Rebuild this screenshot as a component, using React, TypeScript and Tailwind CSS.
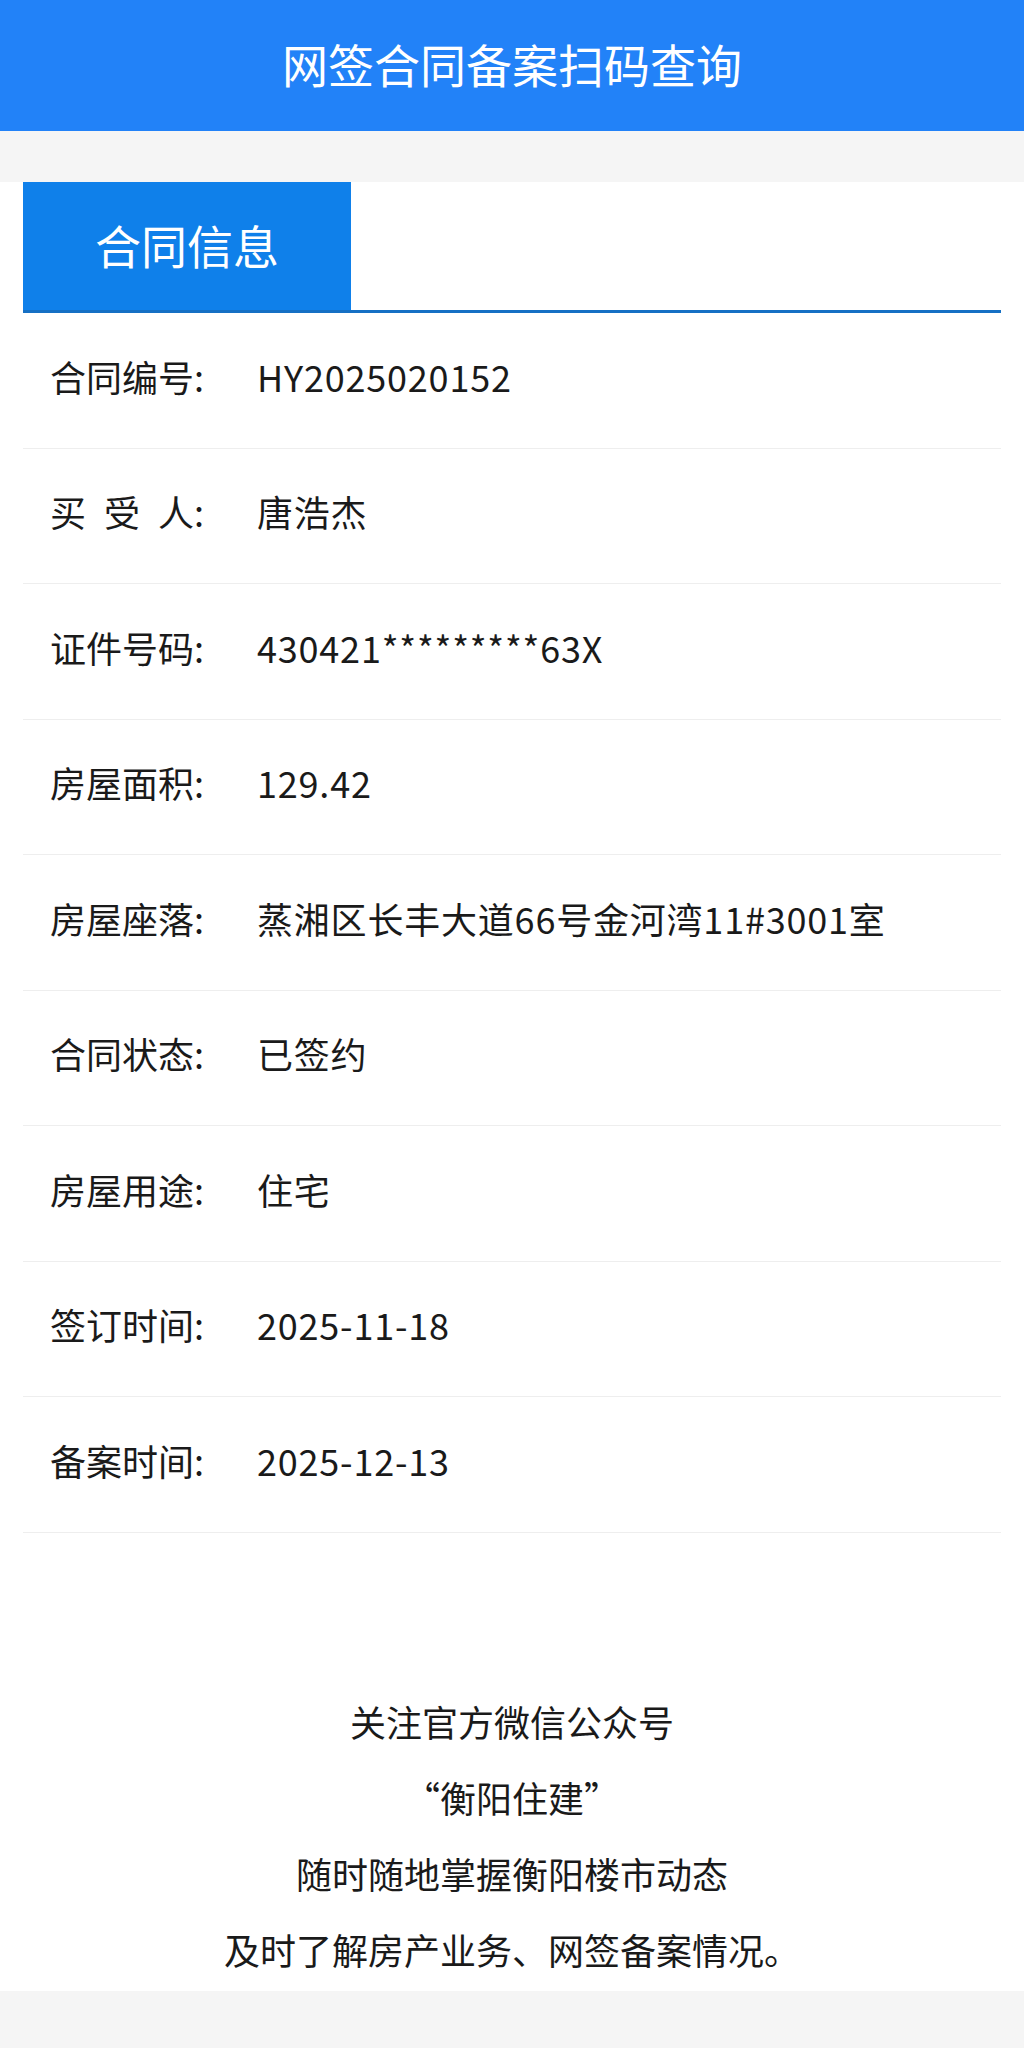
const rows: { label: string; value: string }[] = [
  { label: "合同编号", value: "HY2025020152" },
  { label: "买受人", value: "唐浩杰" },
  { label: "证件号码", value: "430421*********63X" },
  { label: "房屋面积", value: "129.42" },
  { label: "房屋座落", value: "蒸湘区长丰大道66号金河湾11#3001室" },
  { label: "合同状态", value: "已签约" },
  { label: "房屋用途", value: "住宅" },
  { label: "签订时间", value: "2025-11-18" },
  { label: "备案时间", value: "2025-12-13" },
];

const footer = [
  "关注官方微信公众号",
  "“衡阳住建”",
  "随时随地掌握衡阳楼市动态",
  "及时了解房产业务、网签备案情况。",
];

export default function App() {
  return (
    <div
      className="min-h-screen bg-[#f5f5f5] text-[#1a1a1a]"
      style={{ fontFamily: '"Noto Sans CJK SC", "Noto Sans", sans-serif' }}
    >
      <header className="h-[131px] pb-[4px] bg-[#2282f8] flex items-center justify-center text-white text-[46px]">
        网签合同备案扫码查询
      </header>

      <div className="h-[51px] bg-[#f5f5f5]" />

      <main className="bg-white px-[23px] pb-[4px]">
        <div className="flex border-b-[3px] border-[#1670c4]">
          <div className="w-[328px] h-[128px] pb-[4px] bg-[#0f80ea] flex items-center justify-center text-white text-[46px]">
            合同信息
          </div>
        </div>

        {rows.map((row) => (
          <div
            key={row.label}
            className="h-[135.5px] pb-[9px] border-b border-[#eeeeee] flex items-center pl-[27px] text-[36px]"
          >
            <div className="w-[207px] shrink-0 flex">
              <span className="w-[144px] [text-align-last:justify]">{row.label}</span>
              <span>:</span>
            </div>
            <div className="tracking-[0.8px]">{row.value}</div>
          </div>
        ))}

        <div className="pt-[150px] flex flex-col items-center text-[36px] leading-[76px]">
          {footer.map((line) => (
            <p key={line}>{line}</p>
          ))}
        </div>
      </main>
    </div>
  );
}
